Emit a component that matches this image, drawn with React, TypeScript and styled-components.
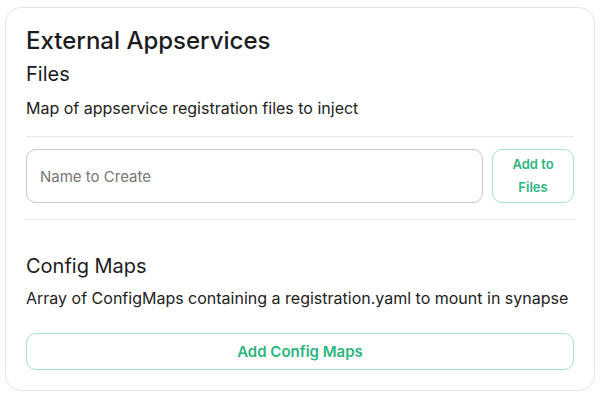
import { createGlobalStyle, styled } from 'styled-components';

const GlobalStyle = createGlobalStyle`
  html, body {
    margin: 0;
    padding: 0;
    background: #ffffff;
  }
  body {
    font-family: Inter, 'Noto Sans', sans-serif;
    color: #1c1c1e;
  }
`;

const Page = styled.div`
  padding: 7px 7px 6px 5px;
`;

const Card = styled.section`
  border: 1px solid #e4e4ee;
  border-radius: 16px;
  padding: 17px 20px 20px;
  display: flex;
  flex-direction: column;
`;

const Title = styled.h2`
  margin: 0;
  font-size: 24px;
  line-height: 32px;
  font-weight: 500;
`;

const SectionTitle = styled.h3<{ $top: number }>`
  margin: ${({ $top }) => $top}px 0 0;
  font-size: 20px;
  line-height: 28px;
  font-weight: 400;
`;

const Description = styled.p<{ $top?: number }>`
  margin: ${({ $top }) => $top ?? 6}px 0 0;
  font-size: 16px;
  line-height: 24px;
  color: #222;
`;

const Divider = styled.hr<{ $top: number }>`
  margin: ${({ $top }) => $top}px 0 0;
  border: none;
  border-top: 1px solid #e8e8f0;
`;

const InputRow = styled.div`
  display: flex;
  gap: 9px;
  margin-top: 12px;
  height: 54px;
`;

const Input = styled.input`
  flex: 1;
  box-sizing: border-box;
  border: 1px solid #c8c8c8;
  border-radius: 10px;
  padding: 0 13px;
  font-family: inherit;
  font-size: 15px;
  color: #1c1c1e;
  outline: none;

  &::placeholder {
    color: #777;
  }
`;

const OutlineButton = styled.button<{ $wide?: boolean }>`
  box-sizing: border-box;
  width: ${({ $wide }) => ($wide ? '100%' : '82px')};
  height: ${({ $wide }) => ($wide ? '37px' : '54px')};
  padding: ${({ $wide }) => ($wide ? '0 16px' : '0 14px')};
  background: #fff;
  border: 1px solid #a6e3ca;
  border-radius: 10px;
  color: #2bb57f;
  font-family: inherit;
  font-size: ${({ $wide }) => ($wide ? '15px' : '13px')};
  font-weight: 600;
  line-height: ${({ $wide }) => ($wide ? '20px' : '23px')};
  text-align: center;
  cursor: pointer;
`;

const WideButtonWrap = styled.div`
  margin-top: 23px;
`;

export default function App() {
  return (
    <Page>
      <GlobalStyle />
      <Card>
        <Title>External Appservices</Title>
        <SectionTitle $top={3}>Files</SectionTitle>
        <Description $top={8}>Map of appservice registration files to inject</Description>
        <Divider $top={16} />
        <InputRow>
          <Input placeholder="Name to Create" />
          <OutlineButton>Add to Files</OutlineButton>
        </InputRow>
        <Divider $top={16} />
        <SectionTitle $top={32}>Config Maps</SectionTitle>
        <Description>Array of ConfigMaps containing a registration.yaml to mount in synapse</Description>
        <WideButtonWrap>
          <OutlineButton $wide>Add Config Maps</OutlineButton>
        </WideButtonWrap>
      </Card>
    </Page>
  );
}
